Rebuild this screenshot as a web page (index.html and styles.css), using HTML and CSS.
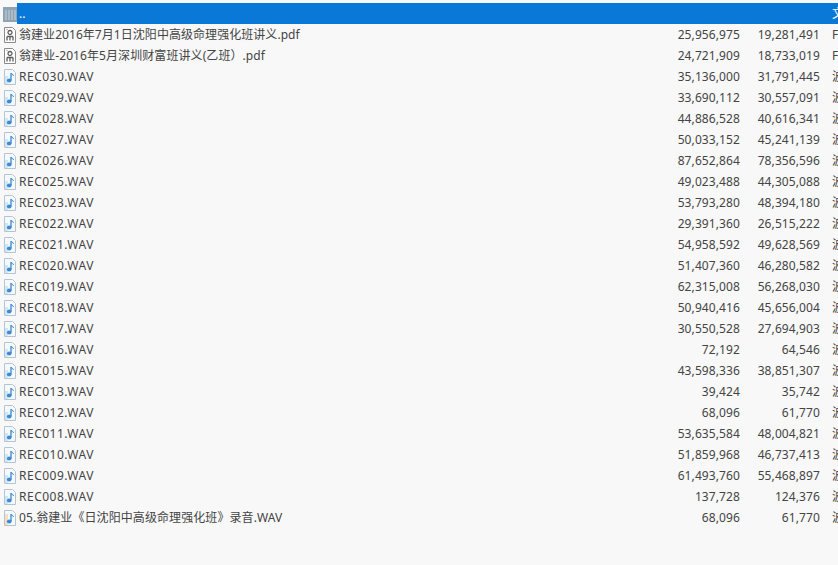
FILE: index.html
```html
<!DOCTYPE html>
<html lang="zh-CN">
<head>
<meta charset="utf-8">
<title>文件列表</title>
<link rel="stylesheet" href="styles.css">
</head>
<body>
<svg class="defs" width="0" height="0" aria-hidden="true">
<defs>
<symbol id="i-up" viewBox="0 0 14 16"><rect x="0" y="1" width="14" height="15" fill="#8ea3b3"/><path d="M3 4v10M6 4v10M9 4v10M12 4v10" stroke="#b9c6cf" stroke-width="1.4"/></symbol>
<symbol id="i-pdf" viewBox="0 0 14 16"><path d="M1.500.5h8l3 3v12h-11z" fill="#fff" stroke="#8a8a8a"/><path d="M7 3.500a2 2 0 1 1-.01 0M4 9.500h6M4 9.500v4M7 9.500v4M10 9.500v4" fill="none" stroke="#5c5c5c" stroke-width="1.300"/><path d="M3 2l2 1" stroke="#d9a0a0"/></symbol>
<symbol id="i-wav" viewBox="0 0 14 16"><path d="M1.500.5h8l3 3v12h-11z" fill="#f4f9fd" stroke="#b4c4d1"/><path d="M2 7h3v8H2z" fill="#cfe6f6"/><path d="M8 4v7.500" stroke="#3d86cc" stroke-width="1.300"/><path d="M8 4.500q2 .5 2.500 2.500" fill="none" stroke="#3d86cc"/><ellipse cx="6.200" cy="11.500" rx="2.300" ry="1.900" fill="#3d8ad4"/></symbol>
<symbol id="i-wav-tinted" viewBox="0 0 14 16"><path d="M1.500.5h8l3 3v12h-11z" fill="#f4f9fd" stroke="#b4c4d1"/><path d="M2 4h3v11H2z" fill="#f6dcc0"/><path d="M8 4v7.500" stroke="#3d86cc" stroke-width="1.300"/><path d="M8 4.500q2 .5 2.500 2.500" fill="none" stroke="#3d86cc"/><ellipse cx="6.200" cy="11.500" rx="2.300" ry="1.900" fill="#3d8ad4"/></symbol>
</defs>
</svg>
<main class="list">
<div class="row selected"><svg class="icon"><use href="#i-up"/></svg><span class="name">..</span><span class="num"></span><span class="num"></span><span class="type">文件夹</span></div>
<div class="row"><svg class="icon"><use href="#i-pdf"/></svg><span class="name">翁建业2016年7月1日沈阳中高级命理强化班讲义.pdf</span><span class="num">25,956,975</span><span class="num">19,281,491</span><span class="type">Foxit</span></div>
<div class="row"><svg class="icon"><use href="#i-pdf"/></svg><span class="name long">翁建业-2016年5月深圳财富班讲义(乙班）.pdf</span><span class="num">24,721,909</span><span class="num">18,733,019</span><span class="type">Foxit</span></div>
<div class="row"><svg class="icon"><use href="#i-wav"/></svg><span class="name wav">REC030.WAV</span><span class="num">35,136,000</span><span class="num">31,791,445</span><span class="type">波形</span></div>
<div class="row"><svg class="icon"><use href="#i-wav"/></svg><span class="name wav">REC029.WAV</span><span class="num">33,690,112</span><span class="num">30,557,091</span><span class="type">波形</span></div>
<div class="row"><svg class="icon"><use href="#i-wav"/></svg><span class="name wav">REC028.WAV</span><span class="num">44,886,528</span><span class="num">40,616,341</span><span class="type">波形</span></div>
<div class="row"><svg class="icon"><use href="#i-wav"/></svg><span class="name wav">REC027.WAV</span><span class="num">50,033,152</span><span class="num">45,241,139</span><span class="type">波形</span></div>
<div class="row"><svg class="icon"><use href="#i-wav"/></svg><span class="name wav">REC026.WAV</span><span class="num">87,652,864</span><span class="num">78,356,596</span><span class="type">波形</span></div>
<div class="row"><svg class="icon"><use href="#i-wav"/></svg><span class="name wav">REC025.WAV</span><span class="num">49,023,488</span><span class="num">44,305,088</span><span class="type">波形</span></div>
<div class="row"><svg class="icon"><use href="#i-wav"/></svg><span class="name wav">REC023.WAV</span><span class="num">53,793,280</span><span class="num">48,394,180</span><span class="type">波形</span></div>
<div class="row"><svg class="icon"><use href="#i-wav"/></svg><span class="name wav">REC022.WAV</span><span class="num">29,391,360</span><span class="num">26,515,222</span><span class="type">波形</span></div>
<div class="row"><svg class="icon"><use href="#i-wav"/></svg><span class="name wav">REC021.WAV</span><span class="num">54,958,592</span><span class="num">49,628,569</span><span class="type">波形</span></div>
<div class="row"><svg class="icon"><use href="#i-wav"/></svg><span class="name wav">REC020.WAV</span><span class="num">51,407,360</span><span class="num">46,280,582</span><span class="type">波形</span></div>
<div class="row"><svg class="icon"><use href="#i-wav"/></svg><span class="name wav">REC019.WAV</span><span class="num">62,315,008</span><span class="num">56,268,030</span><span class="type">波形</span></div>
<div class="row"><svg class="icon"><use href="#i-wav"/></svg><span class="name wav">REC018.WAV</span><span class="num">50,940,416</span><span class="num">45,656,004</span><span class="type">波形</span></div>
<div class="row"><svg class="icon"><use href="#i-wav"/></svg><span class="name wav">REC017.WAV</span><span class="num">30,550,528</span><span class="num">27,694,903</span><span class="type">波形</span></div>
<div class="row"><svg class="icon"><use href="#i-wav"/></svg><span class="name wav">REC016.WAV</span><span class="num">72,192</span><span class="num">64,546</span><span class="type">波形</span></div>
<div class="row"><svg class="icon"><use href="#i-wav"/></svg><span class="name wav">REC015.WAV</span><span class="num">43,598,336</span><span class="num">38,851,307</span><span class="type">波形</span></div>
<div class="row"><svg class="icon"><use href="#i-wav"/></svg><span class="name wav">REC013.WAV</span><span class="num">39,424</span><span class="num">35,742</span><span class="type">波形</span></div>
<div class="row"><svg class="icon"><use href="#i-wav"/></svg><span class="name wav">REC012.WAV</span><span class="num">68,096</span><span class="num">61,770</span><span class="type">波形</span></div>
<div class="row"><svg class="icon"><use href="#i-wav"/></svg><span class="name wav">REC011.WAV</span><span class="num">53,635,584</span><span class="num">48,004,821</span><span class="type">波形</span></div>
<div class="row"><svg class="icon"><use href="#i-wav"/></svg><span class="name wav">REC010.WAV</span><span class="num">51,859,968</span><span class="num">46,737,413</span><span class="type">波形</span></div>
<div class="row"><svg class="icon"><use href="#i-wav"/></svg><span class="name wav">REC009.WAV</span><span class="num">61,493,760</span><span class="num">55,468,897</span><span class="type">波形</span></div>
<div class="row"><svg class="icon"><use href="#i-wav"/></svg><span class="name wav">REC008.WAV</span><span class="num">137,728</span><span class="num">124,376</span><span class="type">波形</span></div>
<div class="row"><svg class="icon"><use href="#i-wav-tinted"/></svg><span class="name long">05.翁建业《日沈阳中高级命理强化班》录音.WAV</span><span class="num">68,096</span><span class="num">61,770</span><span class="type">波形</span></div>
</main>
</body>
</html>
```
FILE: styles.css
```css
html, body {
  margin: 0;
  height: 100%;
  overflow: hidden;
  background: #f8f8f8;
}
.defs {
  position: absolute;
}
.list {
  padding: 3px 0 0 2px;
  font: 12px/21px "Noto Sans", "Noto Sans CJK SC", sans-serif;
  color: #444;
}
.row {
  display: grid;
  grid-template-columns: 15px 639px 84px 80px minmax(0, 1fr);
  height: 21px;
  white-space: nowrap;
}
.icon {
  width: 14px;
  height: 16px;
  margin: 3px 0 0 1px;
}
.name {
  padding-left: 2px;
  overflow: hidden;
  letter-spacing: 0.05px;
}
.wav {
  letter-spacing: 0.5px;
}
.long {
  letter-spacing: 0.08px;
}
.num {
  text-align: right;
  letter-spacing: 0.1px;
}
.type {
  padding-left: 12px;
  overflow: hidden;
}
.selected .name,
.selected .num,
.selected .type {
  background: #0a78d7;
  color: #fff;
}
```
